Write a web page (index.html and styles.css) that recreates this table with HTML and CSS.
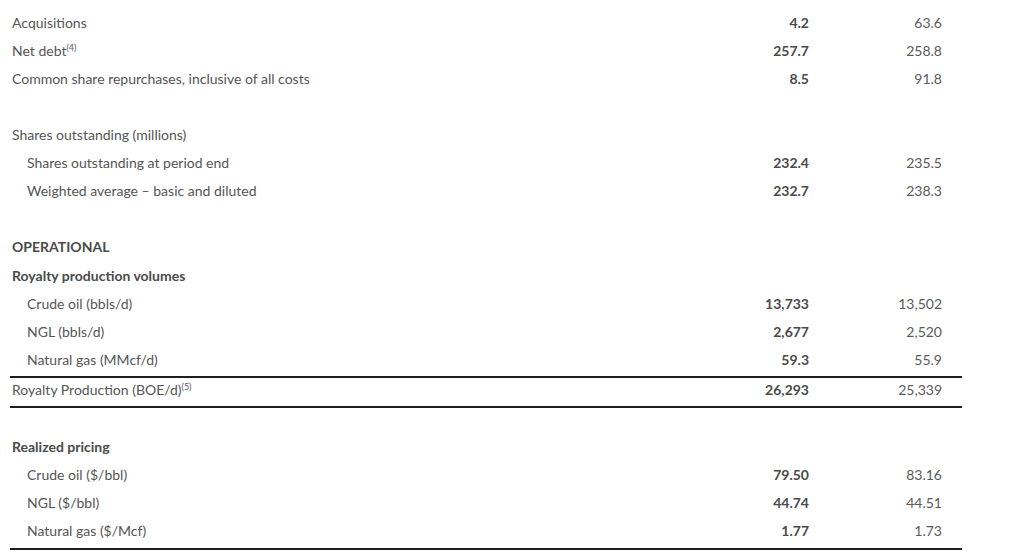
FILE: index.html
```html
<!DOCTYPE html>
<html>
<head>
<meta charset="utf-8">
<link rel="stylesheet" href="styles.css">
</head>
<body>
<table class="fin">
  <colgroup>
    <col class="c-label">
    <col class="c-cur">
    <col class="c-prev">
  </colgroup>
  <tbody>
    <tr><td class="lbl">Acquisitions</td><td class="cur">4.2</td><td class="prev">63.6</td></tr>
    <tr><td class="lbl">Net debt<sup>(4)</sup></td><td class="cur">257.7</td><td class="prev">258.8</td></tr>
    <tr><td class="lbl">Common share repurchases, inclusive of all costs</td><td class="cur">8.5</td><td class="prev">91.8</td></tr>
    <tr class="blank"><td>&nbsp;</td><td></td><td></td></tr>
    <tr><td class="lbl">Shares outstanding (millions)</td><td></td><td></td></tr>
    <tr><td class="lbl ind">Shares outstanding at period end</td><td class="cur">232.4</td><td class="prev">235.5</td></tr>
    <tr><td class="lbl ind">Weighted average – basic and diluted</td><td class="cur">232.7</td><td class="prev">238.3</td></tr>
    <tr class="blank"><td>&nbsp;</td><td></td><td></td></tr>
    <tr class="tall"><td class="lbl head">OPERATIONAL</td><td></td><td></td></tr>
    <tr><td class="lbl head">Royalty production volumes</td><td></td><td></td></tr>
    <tr><td class="lbl ind">Crude oil (bbls/d)</td><td class="cur">13,733</td><td class="prev">13,502</td></tr>
    <tr><td class="lbl ind">NGL (bbls/d)</td><td class="cur">2,677</td><td class="prev">2,520</td></tr>
    <tr class="pre"><td class="lbl ind">Natural gas (MMcf/d)</td><td class="cur">59.3</td><td class="prev">55.9</td></tr>
    <tr class="total"><td class="lbl">Royalty Production (BOE/d)<sup>(5)</sup></td><td class="cur">26,293</td><td class="prev">25,339</td></tr>
    <tr class="gap"><td>&nbsp;</td><td></td><td></td></tr>
    <tr><td class="lbl head">Realized pricing</td><td></td><td></td></tr>
    <tr><td class="lbl ind">Crude oil ($/bbl)</td><td class="cur">79.50</td><td class="prev">83.16</td></tr>
    <tr><td class="lbl ind">NGL ($/bbl)</td><td class="cur">44.74</td><td class="prev">44.51</td></tr>
    <tr class="last"><td class="lbl ind">Natural gas ($/Mcf)</td><td class="cur">1.77</td><td class="prev">1.73</td></tr>
  </tbody>
</table>
</body>
</html>
```
FILE: styles.css
```css
html, body {
  margin: 0;
  padding: 0;
  background: #ffffff;
}
body {
  font-family: "Source Sans Pro", Lato, "Liberation Sans", sans-serif;
  font-size: 14px;
  color: #555555;
}
.fin {
  margin: 9px 0 0 10px;
  width: 952px;
  border-collapse: separate;
  border-spacing: 0;
  table-layout: fixed;
}
.c-label { width: 686px; }
.c-cur { width: 133px; }
.c-prev { width: 133px; }
.fin td {
  padding: 5px 0;
  vertical-align: top;
  line-height: 18px;
  white-space: nowrap;
}
.fin td.lbl { padding-left: 2px; }
.fin td.lbl.ind { padding-left: 17px; }
.head { font-weight: 700; color: #4a4a4a; }
.fin td.cur {
  text-align: right;
  padding-right: 20px;
  font-weight: 700;
  color: #4a4a4a;
}
.fin td.prev {
  text-align: right;
  padding-right: 20px;
  color: #5a5a5a;
}
sup {
  font-size: 9px;
  line-height: 0;
  vertical-align: 5px;
}
.tall td { padding-bottom: 6px; }
.pre td { padding-bottom: 7px; }
.fin .total td {
  border-top: 2px solid #1e1e1e;
  border-bottom: 2px solid #1e1e1e;
  padding-top: 3px;
  padding-bottom: 7px;
}
.fin .gap td { padding-top: 4px; padding-bottom: 3px; }
.fin .last td {
  border-bottom: 2px solid #1e1e1e;
  padding-bottom: 8px;
}
```
